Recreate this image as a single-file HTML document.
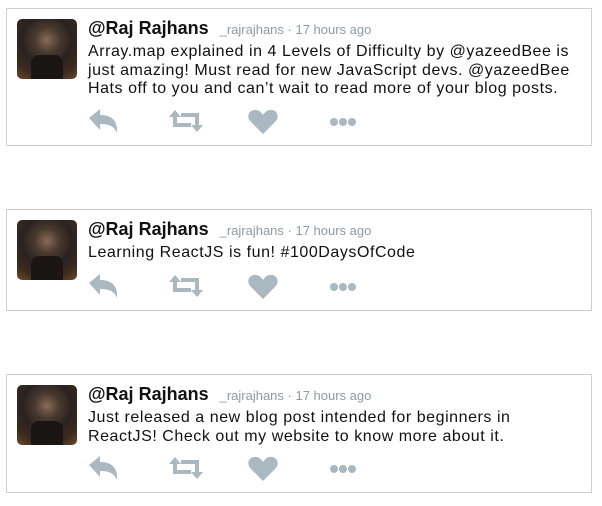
<!DOCTYPE html>
<html><head><meta charset="utf-8"><style>
*{margin:0;padding:0;box-sizing:border-box}
body{width:602px;height:506px;background:#fff;font-family:"Liberation Sans",sans-serif;position:relative;overflow:hidden}
.box{position:absolute;left:6px;width:586px;border:1px solid #cfcfcf}
.av{position:absolute;left:10px;top:10px;width:60px;height:60px;border-radius:5px;background:radial-gradient(circle at 50% 35%,#8a6a55 0,#4a3a30 25%,#2a2220 50%,#3b2a1e 75%,#6a4a2a 100%)}
.av:after{content:"";position:absolute;left:14px;top:36px;width:32px;height:24px;background:#1a1614;border-radius:8px 8px 0 0}
.name{position:absolute;left:81px;top:9px;font-size:18px;font-weight:bold;color:#111;white-space:nowrap}
.name span{font-size:13px;font-weight:normal;color:#8e9aa3;margin-left:6px}
.txt{position:absolute;left:81px;top:34px;font-size:16px;letter-spacing:0.55px;line-height:18.5px;color:#111;width:492px}
.ic{position:absolute;left:0;top:0}
</style></head><body>

<div class="box" style="top:8px;height:138px">
<div class="av"></div>
<div class="name">@Raj Rajhans <span>_rajrajhans · 17 hours ago</span></div>
<div class="txt">Array.map explained in 4 Levels of Difficulty by @yazeedBee is just amazing! Must read for new JavaScript devs. @yazeedBee Hats off to you and can’t wait to read more of your blog posts.</div>
<svg class="ic" width="586" height="138" style="top:0"><g transform="translate(0,113)" fill="#aab8c2">
<path d="M82 -4 L93 -13 L93 -7 C103 -7 111 -3 110 11 C107 4 102 2 93 2 L93 8 Z"/>
<g fill="none" stroke="#aab8c2" stroke-width="4"><path d="M168 -7 V3 H184"/><path d="M174 -7 H190 V4"/></g>
<path d="M162 -5 L168 -12 L174 -5 Z"/><path d="M184 3 L190 10 L196 3 Z"/>
<path d="M256 12 L244 0 C238 -6 243 -13 249 -12 C252 -12 254 -10 256 -7 C258 -10 260 -12 263 -12 C269 -13 274 -6 268 0 Z"/>
<circle cx="327" cy="0" r="4"/><circle cx="336" cy="0" r="4"/><circle cx="345" cy="0" r="4"/>
</g></svg>
</div>

<div class="box" style="top:209px;height:102px">
<div class="av"></div>
<div class="name">@Raj Rajhans <span>_rajrajhans · 17 hours ago</span></div>
<div class="txt">Learning ReactJS is fun! #100DaysOfCode</div>
<svg class="ic" width="586" height="102"><g transform="translate(0,77)" fill="#aab8c2">
<path d="M82 -4 L93 -13 L93 -7 C103 -7 111 -3 110 11 C107 4 102 2 93 2 L93 8 Z"/>
<g fill="none" stroke="#aab8c2" stroke-width="4"><path d="M168 -7 V3 H184"/><path d="M174 -7 H190 V4"/></g>
<path d="M162 -5 L168 -12 L174 -5 Z"/><path d="M184 3 L190 10 L196 3 Z"/>
<path d="M256 12 L244 0 C238 -6 243 -13 249 -12 C252 -12 254 -10 256 -7 C258 -10 260 -12 263 -12 C269 -13 274 -6 268 0 Z"/>
<circle cx="327" cy="0" r="4"/><circle cx="336" cy="0" r="4"/><circle cx="345" cy="0" r="4"/>
</g></svg>
</div>

<div class="box" style="top:374px;height:119px">
<div class="av"></div>
<div class="name">@Raj Rajhans <span>_rajrajhans · 17 hours ago</span></div>
<div class="txt">Just released a new blog post intended for beginners in ReactJS! Check out my website to know more about it.</div>
<svg class="ic" width="586" height="119"><g transform="translate(0,94)" fill="#aab8c2">
<path d="M82 -4 L93 -13 L93 -7 C103 -7 111 -3 110 11 C107 4 102 2 93 2 L93 8 Z"/>
<g fill="none" stroke="#aab8c2" stroke-width="4"><path d="M168 -7 V3 H184"/><path d="M174 -7 H190 V4"/></g>
<path d="M162 -5 L168 -12 L174 -5 Z"/><path d="M184 3 L190 10 L196 3 Z"/>
<path d="M256 12 L244 0 C238 -6 243 -13 249 -12 C252 -12 254 -10 256 -7 C258 -10 260 -12 263 -12 C269 -13 274 -6 268 0 Z"/>
<circle cx="327" cy="0" r="4"/><circle cx="336" cy="0" r="4"/><circle cx="345" cy="0" r="4"/>
</g></svg>
</div>

</body></html>
